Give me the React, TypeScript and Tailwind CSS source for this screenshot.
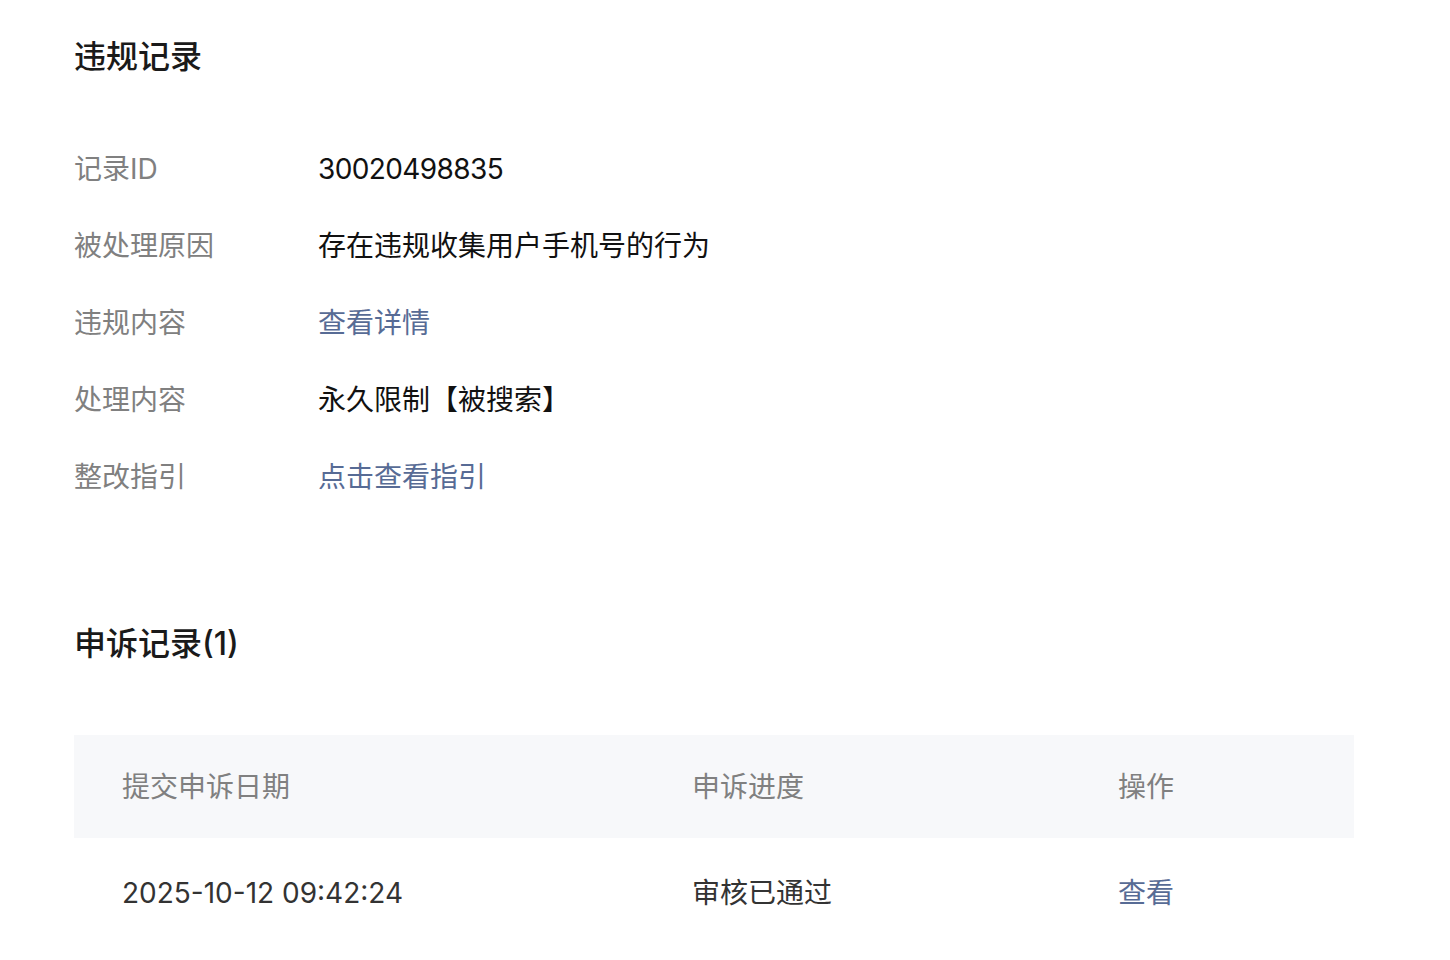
import React from 'react';

const font = 'font-["Inter","Noto_Sans_CJK_SC",sans-serif]';

interface InfoRow {
  label: string;
  value: string;
  link?: boolean;
}

const rows: InfoRow[] = [
  { label: '记录ID', value: '30020498835' },
  { label: '被处理原因', value: '存在违规收集用户手机号的行为' },
  { label: '违规内容', value: '查看详情', link: true },
  { label: '处理内容', value: '永久限制【被搜索】' },
  { label: '整改指引', value: '点击查看指引', link: true },
];

const App: React.FC = () => {
  return (
    <div className={`${font} min-h-screen bg-white px-[74px] pt-[37px]`}>
      <h2 className="text-[32px] leading-[40px] font-medium text-[#1a1a1a]">违规记录</h2>

      <div className="mt-[53px]">
        {rows.map((row) => (
          <div key={row.label} className="flex h-[77px] items-center text-[28px]">
            <span className="w-[244px] shrink-0 text-[#808080]">{row.label}</span>
            <span
              className={
                row.link
                  ? 'text-[#576b95]'
                  : row.label === '记录ID'
                    ? 'tracking-[-0.6px] text-[#111]'
                    : 'text-[#111]'
              }
            >
              {row.value}
            </span>
          </div>
        ))}
      </div>

      <h2 className="mt-[109px] text-[32px] leading-[40px] font-medium text-[#1a1a1a]">申诉记录(1)</h2>

      <div className="mt-[71px] w-[1280px]">
        <div className="grid h-[103px] grid-cols-[569px_424px_1fr] items-center bg-[#f7f8fa] text-[28px] text-[#808080]">
          <span className="pl-[48px]">提交申诉日期</span>
          <span className="pl-[49px]">申诉进度</span>
          <span className="pl-[51px]">操作</span>
        </div>
        <div className="grid h-[110px] grid-cols-[569px_424px_1fr] items-center text-[28px] text-[#333]">
          <span className="pl-[48px]">2025-10-12 09:42:24</span>
          <span className="pl-[49px]">审核已通过</span>
          <span className="pl-[51px] text-[#576b95]">查看</span>
        </div>
      </div>
    </div>
  );
};

export default App;
